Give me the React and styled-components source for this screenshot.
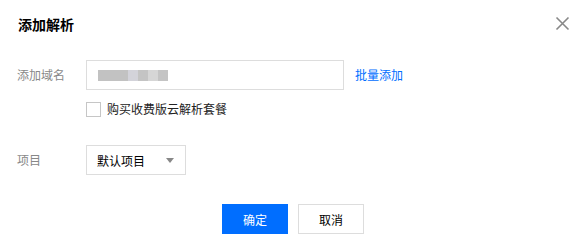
import React from "react";
import styled, { createGlobalStyle } from "styled-components";

const Global = createGlobalStyle`
  html, body { margin: 0; padding: 0; background: #fff; }
  body { font-family: "Noto Sans CJK SC", "Noto Sans", sans-serif; font-size: 12px; color: #000; }
  * { box-sizing: border-box; }
`;

const Dialog = styled.div`
  position: relative;
  width: 580px;
  height: 242px;
  background: #fff;
  display: flex;
  flex-direction: column;
`;

const Header = styled.div`
  padding: 13px 18px 0;
  height: 35px;
`;

const Title = styled.h3`
  margin: 0;
  font-size: 14px;
  font-weight: 700;
  line-height: 22px;
  color: #000;
`;

const Close = styled.button`
  position: absolute;
  top: 15px;
  right: 9px;
  width: 17px;
  height: 17px;
  padding: 0;
  border: 0;
  background: none;
  display: flex;
  align-items: center;
  justify-content: center;
  cursor: pointer;
`;

const Form = styled.div`
  margin-top: 25px;
  display: flex;
  flex-direction: column;
`;

const Row = styled.div`
  display: flex;
  align-items: center;
  margin-top: ${(p) => p.$top || 0}px;
`;

const Label = styled.div`
  width: 86px;
  padding-left: 17px;
  color: #888;
  font-size: 12px;
  line-height: 18px;
`;

const Input = styled.div`
  width: 258px;
  height: 30px;
  border: 1px solid #dddddd;
  display: flex;
  align-items: center;
  padding-left: 11px;
`;

const Blur = styled.div`
  display: flex;
  height: 11px;
`;

const BlurBlock = styled.span`
  width: ${(p) => p.$w}px;
  background: ${(p) => p.$c};
`;

const Link = styled.a`
  margin-left: 11px;
  color: #006eff;
  font-size: 12px;
  line-height: 18px;
  text-decoration: none;
  cursor: pointer;
`;

const Check = styled.label`
  display: flex;
  align-items: center;
  margin-left: 86px;
  gap: 6px;
  font-size: 12px;
  line-height: 18px;
  color: #222;
`;

const Box = styled.span`
  width: 15px;
  height: 15px;
  border: 1px solid #c6c6c6;
  background: #fff;
`;

const Select = styled.div`
  width: 100px;
  height: 30px;
  border: 1px solid #dddddd;
  display: flex;
  align-items: center;
  justify-content: space-between;
  padding: 0 11px 0 10px;
  font-size: 12px;
  color: #000;
`;

const Caret = styled.span`
  width: 0;
  height: 0;
  border-left: 4px solid transparent;
  border-right: 4px solid transparent;
  border-top: 5px solid #888;
`;

const Footer = styled.div`
  margin-top: 29px;
  display: flex;
  justify-content: center;
  gap: 10px;
  padding-left: 6px;
`;

const Button = styled.button`
  width: 66px;
  height: 30px;
  font-family: inherit;
  font-size: 12px;
  border: 1px solid ${(p) => (p.$primary ? "#006eff" : "#dddddd")};
  background: ${(p) => (p.$primary ? "#006eff" : "#fff")};
  color: ${(p) => (p.$primary ? "#fff" : "#000")};
  padding: 0;
  cursor: pointer;
`;

export default function App() {
  return (
    <>
      <Global />
      <Dialog>
        <Header>
          <Title>添加解析</Title>
        </Header>
        <Close aria-label="close">
          <svg width="15" height="15" viewBox="0 0 15 15">
            <path d="M1.5 1.5 L13.5 13.5 M13.5 1.5 L1.5 13.5" stroke="#888" strokeWidth="1.6" />
          </svg>
        </Close>
        <Form>
          <Row>
            <Label>添加域名</Label>
            <Input>
              <Blur>
                <BlurBlock $w={30} $c="#c2c2c2" />
                <BlurBlock $w={10} $c="#d3d3da" />
                <BlurBlock $w={10} $c="#c4c4c4" />
                <BlurBlock $w={10} $c="#d6d6d6" />
                <BlurBlock $w={10} $c="#c4c4c4" />
              </Blur>
            </Input>
            <Link>批量添加</Link>
          </Row>
          <Row $top={10}>
            <Check>
              <Box />
              购买收费版云解析套餐
            </Check>
          </Row>
          <Row $top={27}>
            <Label>项目</Label>
            <Select>
              默认项目
              <Caret />
            </Select>
          </Row>
        </Form>
        <Footer>
          <Button $primary>确定</Button>
          <Button>取消</Button>
        </Footer>
      </Dialog>
    </>
  );
}
